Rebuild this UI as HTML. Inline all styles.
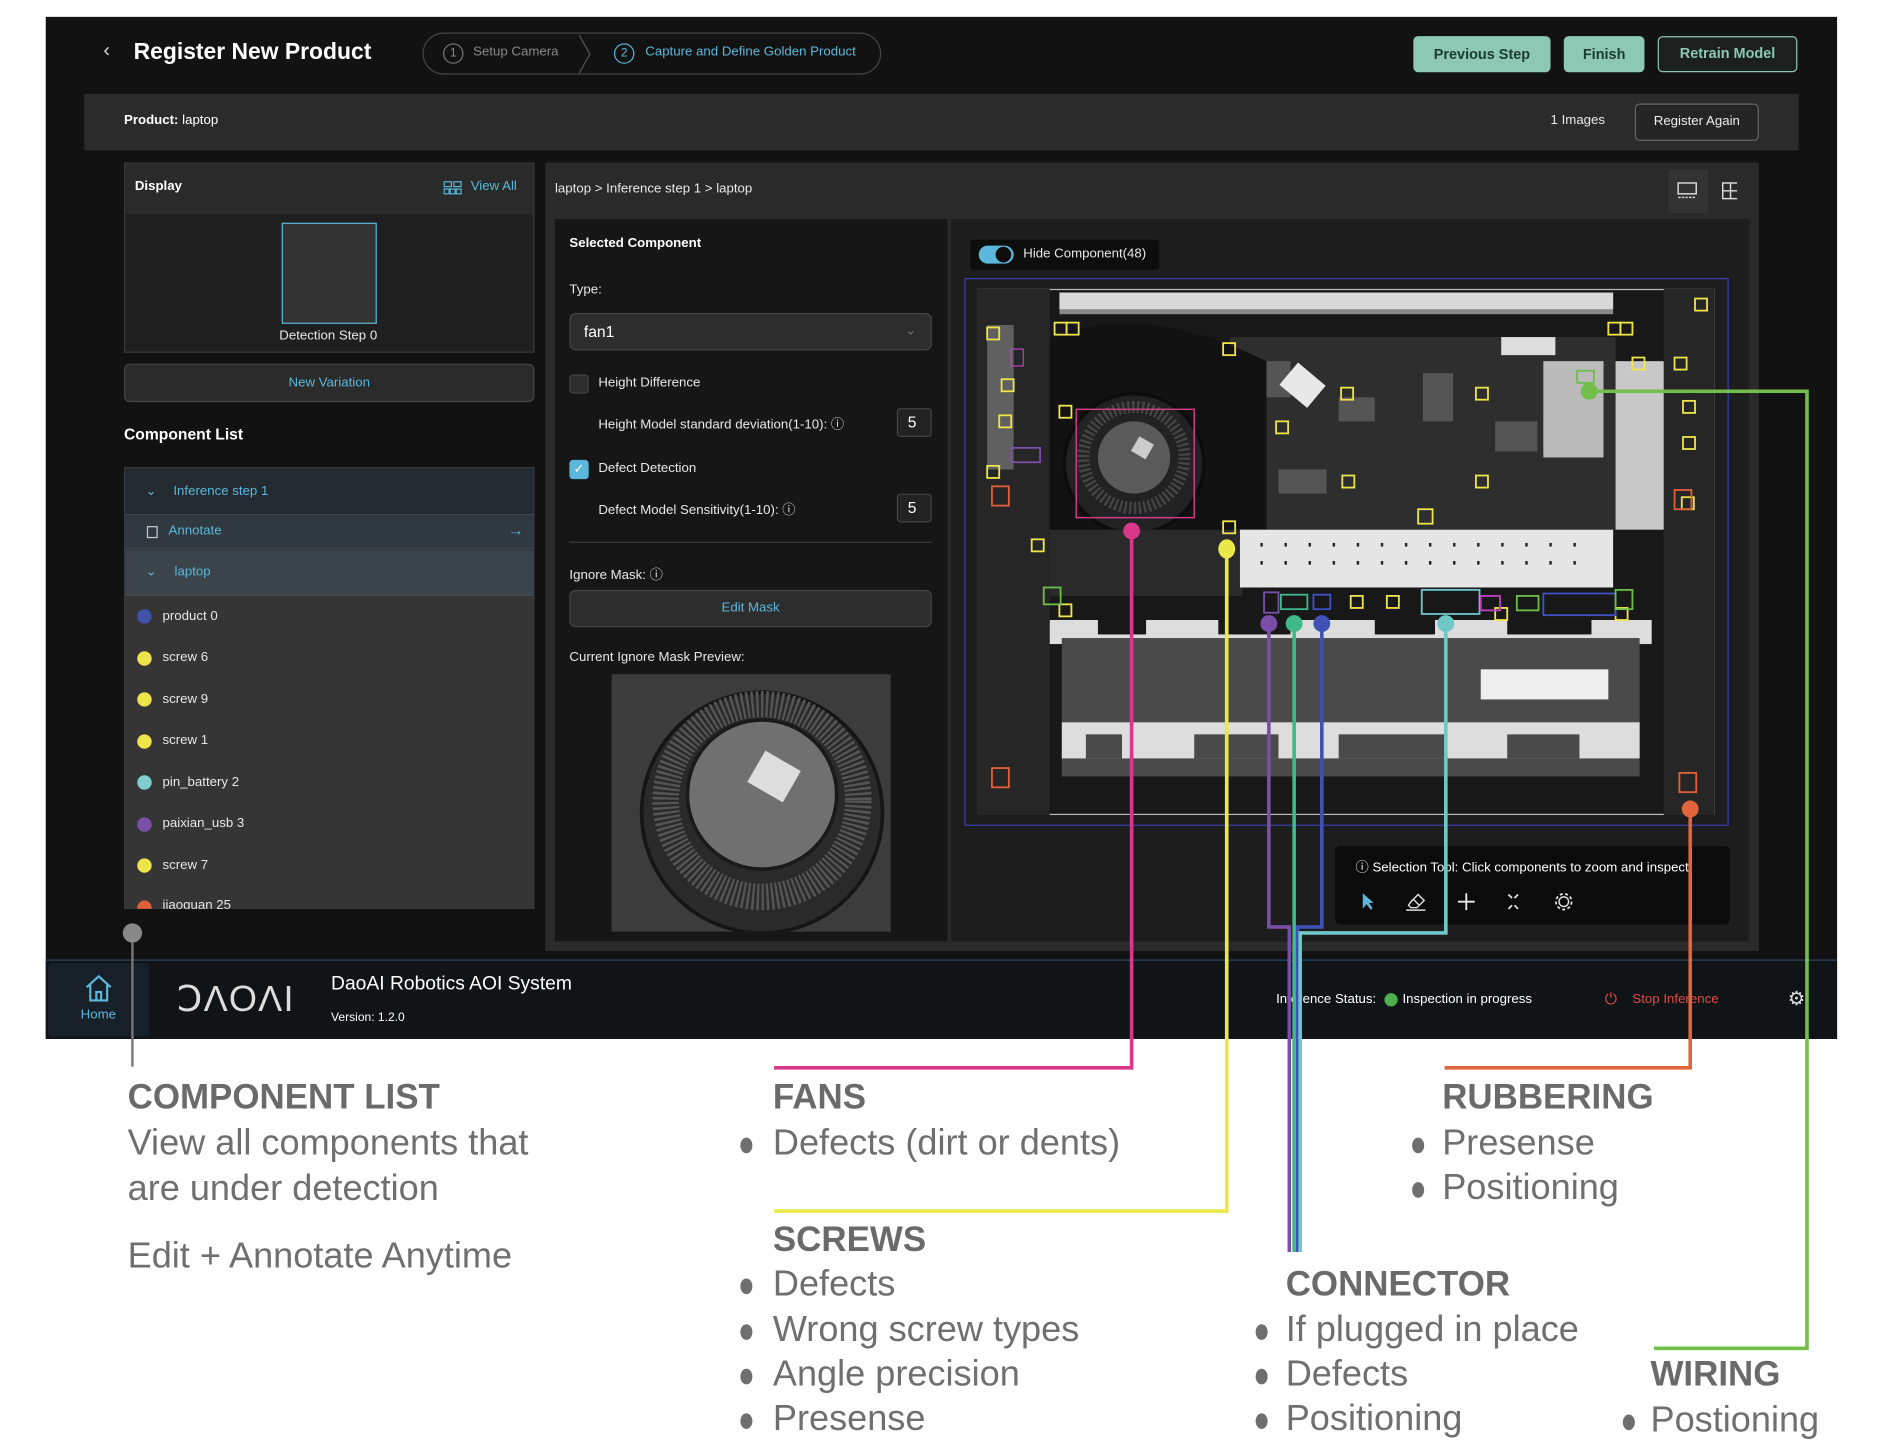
<!DOCTYPE html>
<html><head><meta charset="utf-8">
<style>
*{margin:0;padding:0;box-sizing:border-box}
html,body{width:1878px;height:1450px;background:#fff;overflow:hidden}
#s{position:absolute;left:0;top:0;width:1560px;height:1205px;transform:scale(1.20385);transform-origin:0 0;font-family:"Liberation Sans",sans-serif}
.a{position:absolute}
.t{position:absolute;white-space:nowrap;color:#e8e8e8;font-size:11px}
.teal{color:#5bb8dc}
.btn{position:absolute;border-radius:4px;font-weight:bold;font-size:12px;text-align:center;color:#1d3b31}
.dot{position:absolute;width:12px;height:12px;border-radius:50%;left:114px}
.an{position:absolute;white-space:nowrap;color:#6f6f6f;font-size:30px;font-weight:300}
.ah{position:absolute;white-space:nowrap;color:#6a6a6a;font-size:29px;font-weight:bold;letter-spacing:0}
.bul{position:absolute;width:10px;height:13px;border-radius:50%;background:#6f6f6f}
</style></head><body>
<div id="s">
<!-- app -->
<div class="a" style="left:38px;top:14px;width:1488px;height:849px;background:#121212"></div>
<div class="t" style="left:86px;top:34px;font-size:16px;color:#ddd">‹</div>
<div class="t" style="left:111px;top:33px;font-size:19px;font-weight:bold;color:#fff">Register New Product</div>
<div class="a" style="left:351px;top:27px;width:381px;height:35px;border:1px solid #444;border-radius:18px"></div>
<div class="a" style="left:368px;top:36px;width:17px;height:17px;border:1px solid #777;border-radius:50%;color:#888;font-size:10px;text-align:center;line-height:15px">1</div>
<div class="t" style="left:393px;top:37px;color:#888">Setup Camera</div>
<svg class="a" style="left:478px;top:28px" width="16" height="34"><path d="M3 1 L12 17 L3 33" stroke="#555" fill="none"/></svg>
<div class="a" style="left:510px;top:36px;width:17px;height:17px;border:1px solid #5bb8dc;border-radius:50%;color:#5bb8dc;font-size:10px;text-align:center;line-height:15px">2</div>
<div class="t teal" style="left:536px;top:37px">Capture and Define Golden Product</div>
<div class="btn" style="left:1174px;top:30px;width:114px;height:30px;background:#8cc8b4;line-height:30px">Previous Step</div>
<div class="btn" style="left:1299px;top:30px;width:67px;height:30px;background:#8cc8b4;line-height:30px">Finish</div>
<div class="btn" style="left:1377px;top:30px;width:116px;height:30px;border:1.5px solid #8cc8b4;color:#8cc8b4;background:#1b1f1e;line-height:27px">Retrain Model</div>
<!-- product bar -->
<div class="a" style="left:70px;top:78px;width:1424px;height:47px;background:#2b2b2b"></div>
<div class="t" style="left:103px;top:94px;color:#fff"><b>Product:</b> laptop</div>
<div class="t" style="left:1288px;top:94px">1 Images</div>
<div class="a" style="left:1358px;top:86px;width:103px;height:31px;border:1px solid #666;border-radius:4px;background:#252525;color:#eee;font-size:11px;text-align:center;line-height:29px">Register Again</div>
<!-- left display -->
<div class="a" style="left:103px;top:135px;width:341px;height:158px;background:#1f1f1f;border:1px solid #3a3a3a"></div>
<div class="a" style="left:104px;top:136px;width:339px;height:42px;background:#2a2a2a"></div>
<div class="t" style="left:112px;top:149px;font-weight:bold;color:#fff">Display</div>
<svg class="a" style="left:368px;top:150px" width="16" height="12"><g fill="none" stroke="#5bb8dc" stroke-width="1"><rect x="1" y="1" width="6" height="4"/><rect x="9" y="1" width="6" height="4"/><rect x="1" y="7" width="4" height="4"/><rect x="6" y="7" width="4" height="4"/><rect x="11" y="7" width="4" height="4"/></g></svg>
<div class="t teal" style="left:391px;top:149px">View All</div>
<div class="a" style="left:234px;top:185px;width:79px;height:84px;background:#333;border:1.5px solid #5bb8dc"></div>
<div class="t" style="left:232px;top:273px">Detection Step 0</div>
<div class="a" style="left:103px;top:302px;width:341px;height:32px;background:#2b2b2b;border:1px solid #444;border-radius:5px;text-align:center;line-height:30px;font-size:11px;color:#5bb8dc">New Variation</div>
<div class="t" style="left:103px;top:353px;font-size:13px;font-weight:bold;color:#fff">Component List</div>
<div class="a" style="left:103px;top:388px;width:341px;height:367px;background:#353535;border:1px solid #3a3a3a;overflow:hidden">
 <div class="a" style="left:0;top:0;width:341px;height:39px;background:#242b30;border-bottom:1px solid #3d474d"></div>
 <div class="t teal" style="left:17px;top:12px">⌄</div><div class="t teal" style="left:40px;top:13px">Inference step 1</div>
 <div class="a" style="left:0;top:40px;width:341px;height:27px;background:#2f393f;border-bottom:1px solid #3d474d"></div>
 <div class="a" style="left:18px;top:48px;width:9px;height:10px;border:1.5px solid #ccc"></div>
 <div class="t teal" style="left:36px;top:46px">Annotate</div><div class="t teal" style="left:318px;top:44px;font-size:13px">→</div>
 <div class="a" style="left:0;top:68px;width:341px;height:38px;background:#3a444a;border-bottom:1px solid #4a4a4a"></div>
 <div class="t teal" style="left:17px;top:79px">⌄</div><div class="t teal" style="left:41px;top:80px">laptop</div>
</div>
<div class="dot" style="top:506px;background:#3f51a8"></div><div class="t" style="left:135px;top:506px">product 0</div>
<div class="dot" style="top:541px;background:#eee54a"></div><div class="t" style="left:135px;top:540px">screw 6</div>
<div class="dot" style="top:575px;background:#eee54a"></div><div class="t" style="left:135px;top:575px">screw 9</div>
<div class="dot" style="top:610px;background:#eee54a"></div><div class="t" style="left:135px;top:609px">screw 1</div>
<div class="dot" style="top:644px;background:#7fcdcc"></div><div class="t" style="left:135px;top:644px">pin_battery 2</div>
<div class="dot" style="top:679px;background:#7a4fa8"></div><div class="t" style="left:135px;top:678px">paixian_usb 3</div>
<div class="dot" style="top:713px;background:#eee54a"></div><div class="t" style="left:135px;top:713px">screw 7</div>
<div class="a" style="left:104px;top:745px;width:339px;height:10px;overflow:hidden"><div class="dot" style="left:10px;top:3px;background:#e0603a"></div><div class="t" style="left:31px;top:1px">jiaoquan 25</div></div>
<!-- middle panel -->
<div class="a" style="left:453px;top:135px;width:1008px;height:655px;background:#2a2a2a"></div>
<div class="t" style="left:461px;top:151px">laptop &gt; Inference step 1 &gt; laptop</div>
<div class="a" style="left:1386px;top:141px;width:33px;height:36px;background:#333"></div>
<svg class="a" style="left:1393px;top:151px" width="50" height="16"><g fill="none" stroke="#ddd" stroke-width="1.2"><rect x="1" y="1" width="15" height="9"/><path d="M1 13h15" stroke-dasharray="2 1"/><rect x="38" y="1" width="13" height="13"/><path d="M44.5 1v13M38 7.5h13"/></g></svg>
<div class="a" style="left:461px;top:182px;width:326px;height:600px;background:#161616"></div>
<div class="a" style="left:790px;top:182px;width:663px;height:600px;background:#1d1d1d"></div>
<div class="t" style="left:473px;top:196px;font-weight:bold;color:#fff">Selected Component</div>
<div class="t" style="left:473px;top:235px">Type:</div>
<div class="a" style="left:473px;top:260px;width:301px;height:31px;background:#2d2d2d;border:1px solid #444;border-radius:5px"></div>
<div class="t" style="left:485px;top:268px;font-size:13px;color:#fff">fan1</div>
<div class="t" style="left:752px;top:268px;color:#777">⌄</div>
<div class="a" style="left:473px;top:311px;width:16px;height:16px;background:#2d2d2d;border:1px solid #444;border-radius:3px"></div>
<div class="t" style="left:497px;top:312px">Height Difference</div>
<div class="t" style="left:497px;top:344px">Height Model standard deviation(1-10): ⓘ</div>
<div class="a" style="left:745px;top:339px;width:29px;height:24px;background:#222;border:1px solid #444;border-radius:3px;color:#fff;font-size:13px;line-height:22px;padding-left:8px">5</div>
<div class="a" style="left:473px;top:382px;width:16px;height:16px;background:#5bb8dc;border-radius:3px;color:#fff;font-size:11px;text-align:center;line-height:16px">✓</div>
<div class="t" style="left:497px;top:383px">Defect Detection</div>
<div class="t" style="left:497px;top:415px">Defect Model Sensitivity(1-10): ⓘ</div>
<div class="a" style="left:745px;top:410px;width:29px;height:24px;background:#222;border:1px solid #444;border-radius:3px;color:#fff;font-size:13px;line-height:22px;padding-left:8px">5</div>
<div class="a" style="left:473px;top:450px;width:301px;height:1px;background:#3a3a3a"></div>
<div class="t" style="left:473px;top:469px">Ignore Mask: ⓘ</div>
<div class="a" style="left:473px;top:490px;width:301px;height:31px;background:#2d2d2d;border:1px solid #444;border-radius:5px;text-align:center;line-height:29px;font-size:11px;color:#5bb8dc">Edit Mask</div>
<div class="t" style="left:473px;top:540px">Current Ignore Mask Preview:</div>
<svg class="a" style="left:508px;top:560px" width="232" height="214"><rect width="232" height="214" fill="#3c3c3c"/><circle cx="125" cy="115" r="100" fill="#2a2a2a" stroke="#151515" stroke-width="3"/><circle cx="125" cy="105" r="80" fill="none" stroke="#555" stroke-width="22" stroke-dasharray="2 2"/><circle cx="125" cy="100" r="62" fill="#707070" stroke="#1a1a1a" stroke-width="3"/><rect x="118" y="70" width="34" height="30" fill="#ddd" transform="rotate(30 135 85)"/></svg>
<!-- image area -->
<div class="a" style="left:806px;top:199px;width:157px;height:25px;background:#0d0d0d;border-radius:3px"></div>
<div class="a" style="left:813px;top:204px;width:29px;height:15px;background:#5bb8dc;border-radius:8px"></div>
<div class="a" style="left:827px;top:205px;width:13px;height:13px;background:#0d0d0d;border-radius:50%"></div>
<div class="t" style="left:850px;top:205px">Hide Component(48)</div>
<div class="a" style="left:801px;top:231px;width:635px;height:455px;border:1px solid #3a3fb0"></div>
<svg class="a" style="left:812px;top:240px" width="612" height="437" viewBox="0 0 612 437">
<rect width="612" height="437" fill="#181818" stroke="#bbb" stroke-width="2"/>
<rect x="68" y="3" width="460" height="14" fill="#d8d8d8"/><rect x="68" y="17" width="460" height="4" fill="#888"/>
<rect x="0" y="0" width="60" height="437" fill="#262626"/><rect x="570" y="0" width="42" height="437" fill="#262626"/>
<rect x="8" y="30" width="22" height="120" fill="#999" opacity=".5"/>
<rect x="210" y="40" width="320" height="160" fill="#2e2e2e"/>
<g fill="#555"><rect x="240" y="60" width="20" height="30"/><rect x="300" y="90" width="30" height="20"/><rect x="370" y="70" width="25" height="40"/><rect x="430" y="110" width="35" height="25"/><rect x="250" y="150" width="40" height="20"/></g>
<rect x="255" y="68" width="30" height="24" fill="#e8e8e8" transform="rotate(40 270 80)"/>
<rect x="435" y="40" width="45" height="15" fill="#ddd"/>
<path d="M60 40 Q140 10 240 60 L240 200 L60 200Z" fill="#121212"/>
<circle cx="130" cy="145" r="58" fill="#222" stroke="#0c0c0c" stroke-width="3"/>
<circle cx="130" cy="140" r="42" fill="none" stroke="#444" stroke-width="10" stroke-dasharray="2 2"/>
<circle cx="130" cy="140" r="30" fill="#5a5a5a"/><rect x="130" y="125" width="14" height="14" fill="#ccc" transform="rotate(30 137 132)"/>
<rect x="60" y="200" width="160" height="55" fill="#2a2a2a"/>
<rect x="470" y="60" width="50" height="80" fill="#bbb"/><rect x="530" y="60" width="40" height="140" fill="#c8c8c8"/>
<rect x="218" y="200" width="310" height="48" fill="#e6e6e6"/>
<g fill="#222"><rect x="235" y="211" width="2" height="3"/><rect x="255" y="211" width="2" height="3"/><rect x="275" y="211" width="2" height="3"/><rect x="295" y="211" width="2" height="3"/><rect x="315" y="211" width="2" height="3"/><rect x="335" y="211" width="2" height="3"/><rect x="355" y="211" width="2" height="3"/><rect x="375" y="211" width="2" height="3"/><rect x="395" y="211" width="2" height="3"/><rect x="415" y="211" width="2" height="3"/><rect x="435" y="211" width="2" height="3"/><rect x="455" y="211" width="2" height="3"/><rect x="475" y="211" width="2" height="3"/><rect x="495" y="211" width="2" height="3"/><rect x="235" y="226" width="2" height="3"/><rect x="255" y="226" width="2" height="3"/><rect x="275" y="226" width="2" height="3"/><rect x="295" y="226" width="2" height="3"/><rect x="315" y="226" width="2" height="3"/><rect x="335" y="226" width="2" height="3"/><rect x="355" y="226" width="2" height="3"/><rect x="375" y="226" width="2" height="3"/><rect x="395" y="226" width="2" height="3"/><rect x="415" y="226" width="2" height="3"/><rect x="435" y="226" width="2" height="3"/><rect x="455" y="226" width="2" height="3"/><rect x="475" y="226" width="2" height="3"/><rect x="495" y="226" width="2" height="3"/></g>
<rect x="60" y="275" width="500" height="20" fill="#ddd"/>
<rect x="70" y="290" width="480" height="115" fill="#4a4a4a"/>
<g fill="#181818"><rect x="100" y="275" width="40" height="12"/><rect x="200" y="275" width="60" height="12"/><rect x="330" y="275" width="50" height="12"/><rect x="440" y="275" width="70" height="12"/></g>
<rect x="70" y="360" width="480" height="30" fill="#ddd"/>
<g fill="#4a4a4a"><rect x="90" y="370" width="30" height="20"/><rect x="180" y="370" width="70" height="20"/><rect x="300" y="370" width="90" height="20"/><rect x="440" y="370" width="60" height="20"/></g>
<rect x="418" y="316" width="106" height="25" fill="#eee"/>
<g fill="none" stroke="#eee54a" stroke-width="1.5">
<rect x="8" y="32" width="10" height="10"/><rect x="64" y="28" width="10" height="10"/><rect x="74" y="28" width="10" height="10"/><rect x="204" y="45" width="10" height="10"/><rect x="302" y="82" width="10" height="10"/><rect x="414" y="82" width="10" height="10"/><rect x="524" y="28" width="10" height="10"/><rect x="534" y="28" width="10" height="10"/><rect x="596" y="8" width="10" height="10"/><rect x="586" y="93" width="10" height="10"/><rect x="586" y="123" width="10" height="10"/><rect x="544" y="57" width="10" height="10"/><rect x="579" y="57" width="10" height="10"/><rect x="248" y="110" width="10" height="10"/><rect x="414" y="155" width="10" height="10"/><rect x="303" y="155" width="10" height="10"/><rect x="366" y="183" width="12" height="12"/><rect x="204" y="193" width="10" height="10"/><rect x="45" y="208" width="10" height="10"/><rect x="68" y="262" width="10" height="10"/><rect x="430" y="265" width="10" height="10"/><rect x="530" y="265" width="10" height="10"/><rect x="585" y="173" width="10" height="10"/><rect x="20" y="75" width="10" height="10"/><rect x="18" y="105" width="10" height="10"/><rect x="8" y="147" width="10" height="10"/><rect x="68" y="97" width="10" height="10"/><rect x="310" y="255" width="10" height="10"/><rect x="340" y="255" width="10" height="10"/></g>
<g fill="none" stroke="#e0603a" stroke-width="1.5"><rect x="12" y="164" width="14" height="16"/><rect x="579" y="167" width="14" height="16"/><rect x="12" y="398" width="14" height="16"/><rect x="583" y="402" width="14" height="16"/></g>
<rect x="82" y="100" width="98" height="90" fill="none" stroke="#d83a8c" stroke-width="1.2"/>
<rect x="28" y="132" width="24" height="12" fill="none" stroke="#7a4fa8" stroke-width="1.5"/><rect x="28" y="50" width="10" height="14" fill="none" stroke="#c040c0"/>
<rect x="55" y="248" width="14" height="14" fill="none" stroke="#6dbf4a" stroke-width="1.5"/>
<rect x="238" y="252" width="12" height="17" fill="none" stroke="#7a4fa8" stroke-width="1.5"/>
<rect x="252" y="254" width="22" height="12" fill="none" stroke="#3fb98a" stroke-width="1.5"/>
<rect x="279" y="254" width="14" height="12" fill="none" stroke="#3f51c8" stroke-width="1.5"/>
<rect x="369" y="250" width="48" height="20" fill="none" stroke="#6fc7c9" stroke-width="1.5"/>
<rect x="418" y="255" width="16" height="12" fill="none" stroke="#c040c0" stroke-width="1.5"/>
<rect x="448" y="255" width="18" height="12" fill="none" stroke="#6dbf4a" stroke-width="1.5"/>
<rect x="470" y="253" width="60" height="18" fill="none" stroke="#3f51c8" stroke-width="1.5"/>
<rect x="530" y="250" width="14" height="16" fill="none" stroke="#6dbf4a" stroke-width="1.5"/>
<rect x="498" y="68" width="14" height="10" fill="none" stroke="#6dbf4a" stroke-width="1.5"/>
</svg>
<!-- selection tool -->
<div class="a" style="left:1109px;top:703px;width:328px;height:65px;background:#0b0b0b;border-radius:4px"></div>
<div class="t" style="left:1126px;top:712px;color:#fff">ⓘ Selection Tool: Click components to zoom and inspect.</div>
<svg class="a" style="left:1128px;top:740px" width="180" height="18"><path d="M4 2 L4 15 L7 11 L11 16 L12 14 L9 10 L13 10Z" fill="#5bb8dc"/><path d="M44 9 L50 3 L55 8 L49 14 L44 14 L42 12Z M46 7 L51 12 M40 16h16" fill="none" stroke="#ddd" stroke-width="1.2"/><path d="M90 2v14M83 9h14" stroke="#eee" stroke-width="1.5"/><path d="M125 3l3 3M133 3l-3 3M125 15l3-3M133 15l-3-3" stroke="#ddd" stroke-width="1.5"/><circle cx="171" cy="9" r="4" fill="none" stroke="#ddd" stroke-width="1.2"/><circle cx="171" cy="9" r="6.5" fill="none" stroke="#ddd" stroke-width="1.5" stroke-dasharray="2.5 2"/></svg>
<!-- footer -->
<div class="a" style="left:38px;top:797px;width:1488px;height:66px;background:#111417;border-top:1.5px solid #2b4a63"></div>
<div class="a" style="left:40px;top:800px;width:84px;height:61px;background:#172029;border-radius:3px"></div>
<svg class="a" style="left:69px;top:808px" width="26" height="26"><path d="M3 12 L13 3 L23 12 M6 10 V23 H20 V10 M11 23 V16 H15 V23" fill="none" stroke="#5bb8dc" stroke-width="1.8"/></svg>
<div class="t teal" style="left:67px;top:837px;font-size:11px">Home</div>
<div class="t" style="left:147px;top:813px;font-size:30px;letter-spacing:1px;color:#ddd;font-weight:300">ↃΛOΛI</div>
<div class="t" style="left:275px;top:809px;font-size:16px;color:#fff">DaoAI Robotics AOI System</div>
<div class="t" style="left:275px;top:840px;font-size:10px;color:#fff">Version: 1.2.0</div>
<div class="t" style="left:1060px;top:824px;color:#fff">Inference Status:</div>
<div class="a" style="left:1150px;top:825px;width:11px;height:11px;border-radius:50%;background:#4cb04c"></div>
<div class="t" style="left:1165px;top:824px;color:#fff">Inspection in progress</div>
<div class="t" style="left:1333px;top:822px;color:#e04a4a;font-size:13px">⏻</div>
<div class="t" style="left:1356px;top:824px;color:#e04a4a">Stop Inference</div>
<div class="t" style="left:1485px;top:820px;font-size:16px;color:#ddd">⚙</div>
<!-- annotation lines -->
<svg class="a" style="left:0;top:0" width="1560" height="1205">
<g fill="none" stroke-width="3">
<path d="M110 774 V886" stroke="#777" stroke-width="2"/>
<path d="M940 441 V887 H643" stroke="#d8378a"/>
<path d="M1019 456 V1006 H643" stroke="#ebe84a"/>
<path d="M1054 518 V770 H1071 V1040" stroke="#7a4fa8"/>
<path d="M1098 518 V770 H1078 V1040" stroke="#3f51b5"/>
<path d="M1201 518 V775 H1080 V1040" stroke="#6fc7c9"/>
<path d="M1075 518 V1040" stroke="#3fb98a"/>
<path d="M1404 672 V887 H1200" stroke="#e2643a"/>
<path d="M1320 325 H1501 V1120 H1374" stroke="#72bf4a"/>
</g>
<ellipse cx="110" cy="775" rx="8" ry="8" fill="#888"/>
<g><circle cx="940" cy="441" r="7" fill="#d8378a"/><ellipse cx="1019" cy="456" rx="7" ry="8" fill="#ebe84a"/><circle cx="1054" cy="518" r="7" fill="#7a4fa8"/><circle cx="1075" cy="518" r="7" fill="#3fb98a"/><circle cx="1098" cy="518" r="7" fill="#3f51b5"/><circle cx="1201" cy="518" r="7" fill="#6fc7c9"/><circle cx="1404" cy="672" r="7" fill="#e2643a"/><circle cx="1320" cy="325" r="7" fill="#72bf4a"/></g>
</svg>
<!-- annotation text -->
<div class="ah" style="left:106px;top:896px">COMPONENT LIST</div>
<div class="an" style="left:106px;top:933px">View all components that</div>
<div class="an" style="left:106px;top:971px">are under detection</div>
<div class="an" style="left:106px;top:1027px">Edit + Annotate Anytime</div>
<div class="ah" style="left:642px;top:896px">FANS</div>
<div class="bul" style="left:615px;top:945px"></div><div class="an" style="left:642px;top:933px">Defects (dirt or dents)</div>
<div class="ah" style="left:642px;top:1014px">SCREWS</div>
<div class="bul" style="left:615px;top:1062px"></div><div class="an" style="left:642px;top:1050px">Defects</div>
<div class="bul" style="left:615px;top:1100px"></div><div class="an" style="left:642px;top:1088px">Wrong screw types</div>
<div class="bul" style="left:615px;top:1137px"></div><div class="an" style="left:642px;top:1125px">Angle precision</div>
<div class="bul" style="left:615px;top:1174px"></div><div class="an" style="left:642px;top:1162px">Presense</div>
<div class="ah" style="left:1198px;top:896px">RUBBERING</div>
<div class="bul" style="left:1173px;top:945px"></div><div class="an" style="left:1198px;top:933px">Presense</div>
<div class="bul" style="left:1173px;top:982px"></div><div class="an" style="left:1198px;top:970px">Positioning</div>
<div class="ah" style="left:1068px;top:1051px">CONNECTOR</div>
<div class="bul" style="left:1043px;top:1100px"></div><div class="an" style="left:1068px;top:1088px">If plugged in place</div>
<div class="bul" style="left:1043px;top:1137px"></div><div class="an" style="left:1068px;top:1125px">Defects</div>
<div class="bul" style="left:1043px;top:1174px"></div><div class="an" style="left:1068px;top:1162px">Positioning</div>
<div class="ah" style="left:1371px;top:1126px">WIRING</div>
<div class="bul" style="left:1348px;top:1175px"></div><div class="an" style="left:1371px;top:1163px">Postioning</div>
</div>
</body></html>
